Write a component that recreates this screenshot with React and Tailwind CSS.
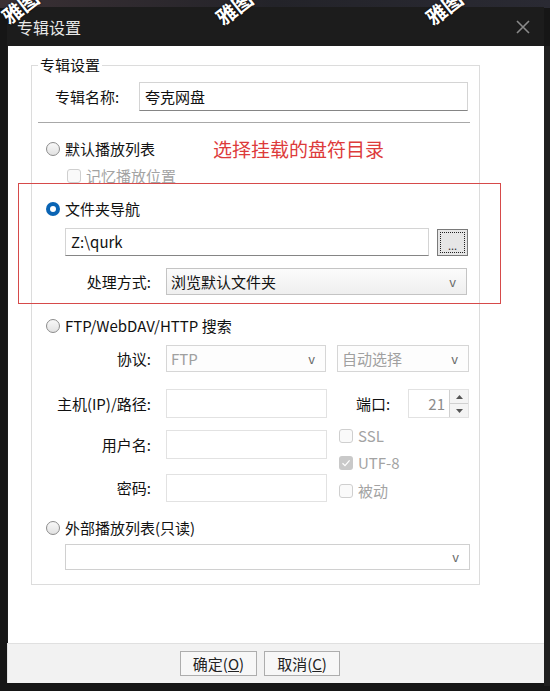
import React from "react";

const Radio = ({ checked, label, className = "" }) => (
  <div className={`flex items-center h-[20px] ${className}`}>
    {checked ? (
      <span className="w-[14px] h-[14px] rounded-full bg-[#0a64b4] flex items-center justify-center shrink-0">
        <span className="w-[6px] h-[6px] rounded-full bg-white" />
      </span>
    ) : (
      <span className="w-[14px] h-[14px] rounded-full border border-[#8c8c8c] bg-gradient-to-b from-[#f8f8f8] to-[#e2e2e2] shrink-0" />
    )}
    <span className="ml-[5px] text-[15px] text-[#111] whitespace-nowrap">{label}</span>
  </div>
);

const Check = ({ checked, label, className = "" }) => (
  <div className={`flex items-center h-[20px] ${className}`}>
    {checked ? (
      <span className="w-[14px] h-[14px] rounded-[3px] bg-[#c9c9c9] flex items-center justify-center shrink-0">
        <svg width="10" height="10" viewBox="0 0 10 10">
          <path d="M1.5 5.2 L4 7.6 L8.6 2.4" fill="none" stroke="#fff" strokeWidth="1.3" />
        </svg>
      </span>
    ) : (
      <span className="w-[14px] h-[14px] rounded-[3px] border border-[#cfcfcf] bg-[#fafafa] shrink-0" />
    )}
    <span className="ml-[5px] text-[15px] text-[#a3a3a3] whitespace-nowrap">{label}</span>
  </div>
);

const Field = ({ value = "", w, h = "h-[29px]", active }) => (
  <div
    className={`${w} ${h} bg-white border flex items-center px-[5px] text-[15px] ${
      active ? "border-[#d4d4d4] border-b-[#858585] text-[#111]" : "border-[#e2e2e2] text-[#9a9a9a]"
    }`}
  >
    {value}
  </div>
);

const Select = ({ value = "", w, active }) => (
  <div
    className={`${w} h-[27px] border flex items-center justify-between pl-[4px] pr-[10px] text-[15px] ${
      active
        ? "border-[#c4c4c4] bg-gradient-to-b from-[#fbfbfb] to-[#efefef] text-[#111]"
        : "border-[#d6d6d6] bg-[#fdfdfd] text-[#a0a0a0]"
    }`}
  >
    <span className="whitespace-nowrap">{value}</span>
    <span className="text-[13px] text-[#6a6a6a]">v</span>
  </div>
);

const Label = ({ children }) => (
  <span className="w-[120px] pr-[1px] text-right text-[15px] text-[#111] whitespace-nowrap">{children}</span>
);

// watermark stamped over the capture
const Mark = ({ className }) => (
  <span
    className={`absolute pointer-events-none text-white font-bold text-[20px] leading-none -rotate-[38deg] [text-shadow:0_0_2px_#000] ${className}`}
  >
    雅图
  </span>
);

export default function App() {
  return (
    <div className="relative w-[550px] h-[691px] overflow-hidden bg-[#161616] font-['Noto_Sans_CJK_SC','Noto_Sans',sans-serif] leading-[20px]">
      <div className="absolute left-0 top-0 w-[550px] h-[8px] bg-gradient-to-r from-[#3a3034] via-[#232329] to-[#2a2a33]" />
      <div className="absolute right-0 top-[46px] w-[6px] h-[640px] bg-[#202020]" />

      <div className="relative ml-[7px] pt-[7px] w-[537px]">
        {/* title bar */}
        <div className="h-[39px] bg-[#1c1c1c] flex items-center justify-between pl-[10px] pr-[14px]">
          <span className="text-[16px] text-[#e8e8e8]">专辑设置</span>
          <svg width="14" height="14" viewBox="0 0 14 14">
            <path d="M1 1 L13 13 M13 1 L1 13" stroke="#8a8a8a" strokeWidth="1.6" />
          </svg>
        </div>

        {/* body */}
        <div className="relative h-[597px] bg-white border-l border-[#1c1c1c] pt-[19px]">
          <div className="relative ml-[23px] w-[449px] h-[520px] border border-[#dcdcdc]">
            <span className="absolute left-[6px] -top-[11px] bg-white px-[2px] text-[15px] text-[#111]">专辑设置</span>

            <div className="flex items-center h-[29px] mt-[16px]">
              <span className="ml-[23px] w-[84px] text-[15px] text-[#111]">专辑名称:</span>
              <Field value="夸克网盘" w="w-[329px]" active />
            </div>

            <div className="ml-[6px] mt-[11px] w-[432px] h-px bg-[#a8a8a8]" />

            <div className="flex items-center mt-[16px] ml-[14px]">
              <Radio label="默认播放列表" className="w-[167px]" />
              <span className="text-[19px] text-[#dd3b3b]">选择挂载的盘符目录</span>
            </div>

            <Check label="记忆播放位置" className="mt-[7px] ml-[35px]" />

            <Radio checked label="文件夹导航" className="mt-[13px] ml-[14px]" />

            <div className="flex items-center mt-[9px] ml-[33px]">
              <Field value="Z:\qurk" w="w-[364px]" h="h-[28px]" active />
              <div className="ml-[8px] w-[31px] h-[27px] border border-[#7a7a7a] bg-[#e6e6e6] p-[2px]">
                <div className="w-full h-full border border-dotted border-[#222] flex items-end justify-center text-[11px] leading-[14px] text-[#333]">
                  ...
                </div>
              </div>
            </div>

            <div className="flex items-center mt-[12px]">
              <Label>处理方式:</Label>
              <div className="ml-[14px]">
                <Select value="浏览默认文件夹" w="w-[301px]" active />
              </div>
            </div>

            <Radio label="FTP/WebDAV/HTTP 搜索" className="mt-[21px] ml-[14px]" />

            <div className="flex items-center mt-[9px]">
              <Label>协议:</Label>
              <div className="ml-[14px] flex gap-[11px]">
                <Select value="FTP" w="w-[160px]" />
                <Select value="自动选择" w="w-[132px]" />
              </div>
            </div>

            <div className="flex items-center mt-[17px]">
              <Label>主机(IP)/路径:</Label>
              <div className="ml-[14px]">
                <Field w="w-[161px]" />
              </div>
              <span className="ml-[29px] w-[52px] text-[15px] text-[#111]">端口:</span>
              <div className="w-[61px] h-[29px] border border-[#e2e2e2] flex">
                <span className="flex-1 text-right pr-[4px] text-[15px] leading-[27px] text-[#8c8c8c]">21</span>
                <div className="w-[19px] flex flex-col border-l border-[#d0d0d0] bg-[#f4f4f4]">
                  <div className="flex-1 flex items-center justify-center border-b border-[#d0d0d0]">
                    <svg width="7" height="4" viewBox="0 0 7 4"><path d="M0 4 L3.5 0 L7 4 Z" fill="#555" /></svg>
                  </div>
                  <div className="flex-1 flex items-center justify-center">
                    <svg width="7" height="4" viewBox="0 0 7 4"><path d="M0 0 L3.5 4 L7 0 Z" fill="#555" /></svg>
                  </div>
                </div>
              </div>
            </div>

            <div className="flex mt-[8px]">
              <div className="pt-[4px]">
                <div className="flex items-center">
                  <Label>用户名:</Label>
                  <div className="ml-[14px]">
                    <Field w="w-[161px]" />
                  </div>
                </div>
                <div className="flex items-center mt-[15px]">
                  <Label>密码:</Label>
                  <div className="ml-[14px]">
                    <Field w="w-[161px]" h="h-[28px]" />
                  </div>
                </div>
              </div>
              <div className="ml-[12px]">
                <Check label="SSL" />
                <Check checked label="UTF-8" className="mt-[7px]" />
                <Check label="被动" className="mt-[8px]" />
              </div>
            </div>

            <Radio label="外部播放列表(只读)" className="mt-[16px] ml-[14px]" />

            <div className="mt-[6px] ml-[33px]">
              <div className="w-[405px] h-[26px] border border-[#d0d0d0] bg-white flex items-center justify-end pr-[10px]">
                <span className="text-[13px] text-[#6a6a6a]">v</span>
              </div>
            </div>
          </div>

          {/* red annotation frame */}
          <div className="absolute left-[10px] top-[137px] w-[483px] h-[121px] border border-[#d64a4a] pointer-events-none" />
        </div>

        {/* footer */}
        <div className="h-[40px] bg-[#f2f2f2] border-t border-[#e0e0e0] border-l border-[#1c1c1c] flex items-start pt-[7px] pl-[172px] gap-[7px]">
          <button className="w-[77px] h-[25px] border border-[#adadad] bg-[#f7f7f7] text-[15px] text-[#222] leading-[22px]">
            确定(<span className="underline">O</span>)
          </button>
          <button className="w-[76px] h-[25px] border border-[#adadad] bg-[#f7f7f7] text-[15px] text-[#222] leading-[22px]">
            取消(<span className="underline">C</span>)
          </button>
        </div>
      </div>

      <Mark className="left-[0px] -top-[3px]" />
      <Mark className="left-[214px] -top-[2px]" />
      <Mark className="left-[424px] -top-[2px]" />
    </div>
  );
}
